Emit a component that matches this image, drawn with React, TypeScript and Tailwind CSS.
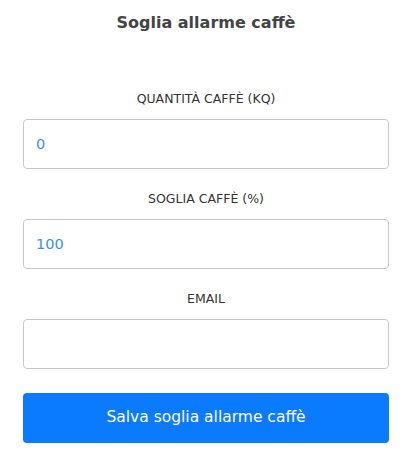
import { useState } from "react";

const fields = [
  { label: "QUANTITÀ CAFFÈ (KQ)", value: "0" },
  { label: "SOGLIA CAFFÈ (%)", value: "100" },
  { label: "EMAIL", value: "" },
];

const App = () => {
  const [values, setValues] = useState(fields.map((f) => f.value));

  return (
    <div className="w-[412px] h-[455px] bg-white px-[23px] font-['DejaVu_Sans',sans-serif] text-[#444]">
      <h1 className="pt-[12px] h-[34px] text-center text-[16px] font-bold leading-[22px] text-[#444]">
        Soglia allarme caffè
      </h1>
      <div className="mt-[55px] flex flex-col">
        {fields.map((f, i) => (
          <div key={f.label} className="flex flex-col mb-[20px]">
            <label className="h-[20px] text-center text-[12.5px] leading-[20px] text-[#333] mb-[10px]">
              {f.label}
            </label>
            <input
              className="h-[50px] w-full rounded-[4px] border border-[#c8c8c8] px-[12px] text-[14.5px] text-[#3c8ef3] outline-none"
              value={values[i]}
              onChange={(e) => {
                const next = [...values];
                next[i] = e.target.value;
                setValues(next);
              }}
            />
          </div>
        ))}
        <button className="mt-[4px] h-[50px] w-full rounded-[4px] bg-[#0a7bfe] text-[15.5px] text-white">
          Salva soglia allarme caffè
        </button>
      </div>
    </div>
  );
};

export default App;
